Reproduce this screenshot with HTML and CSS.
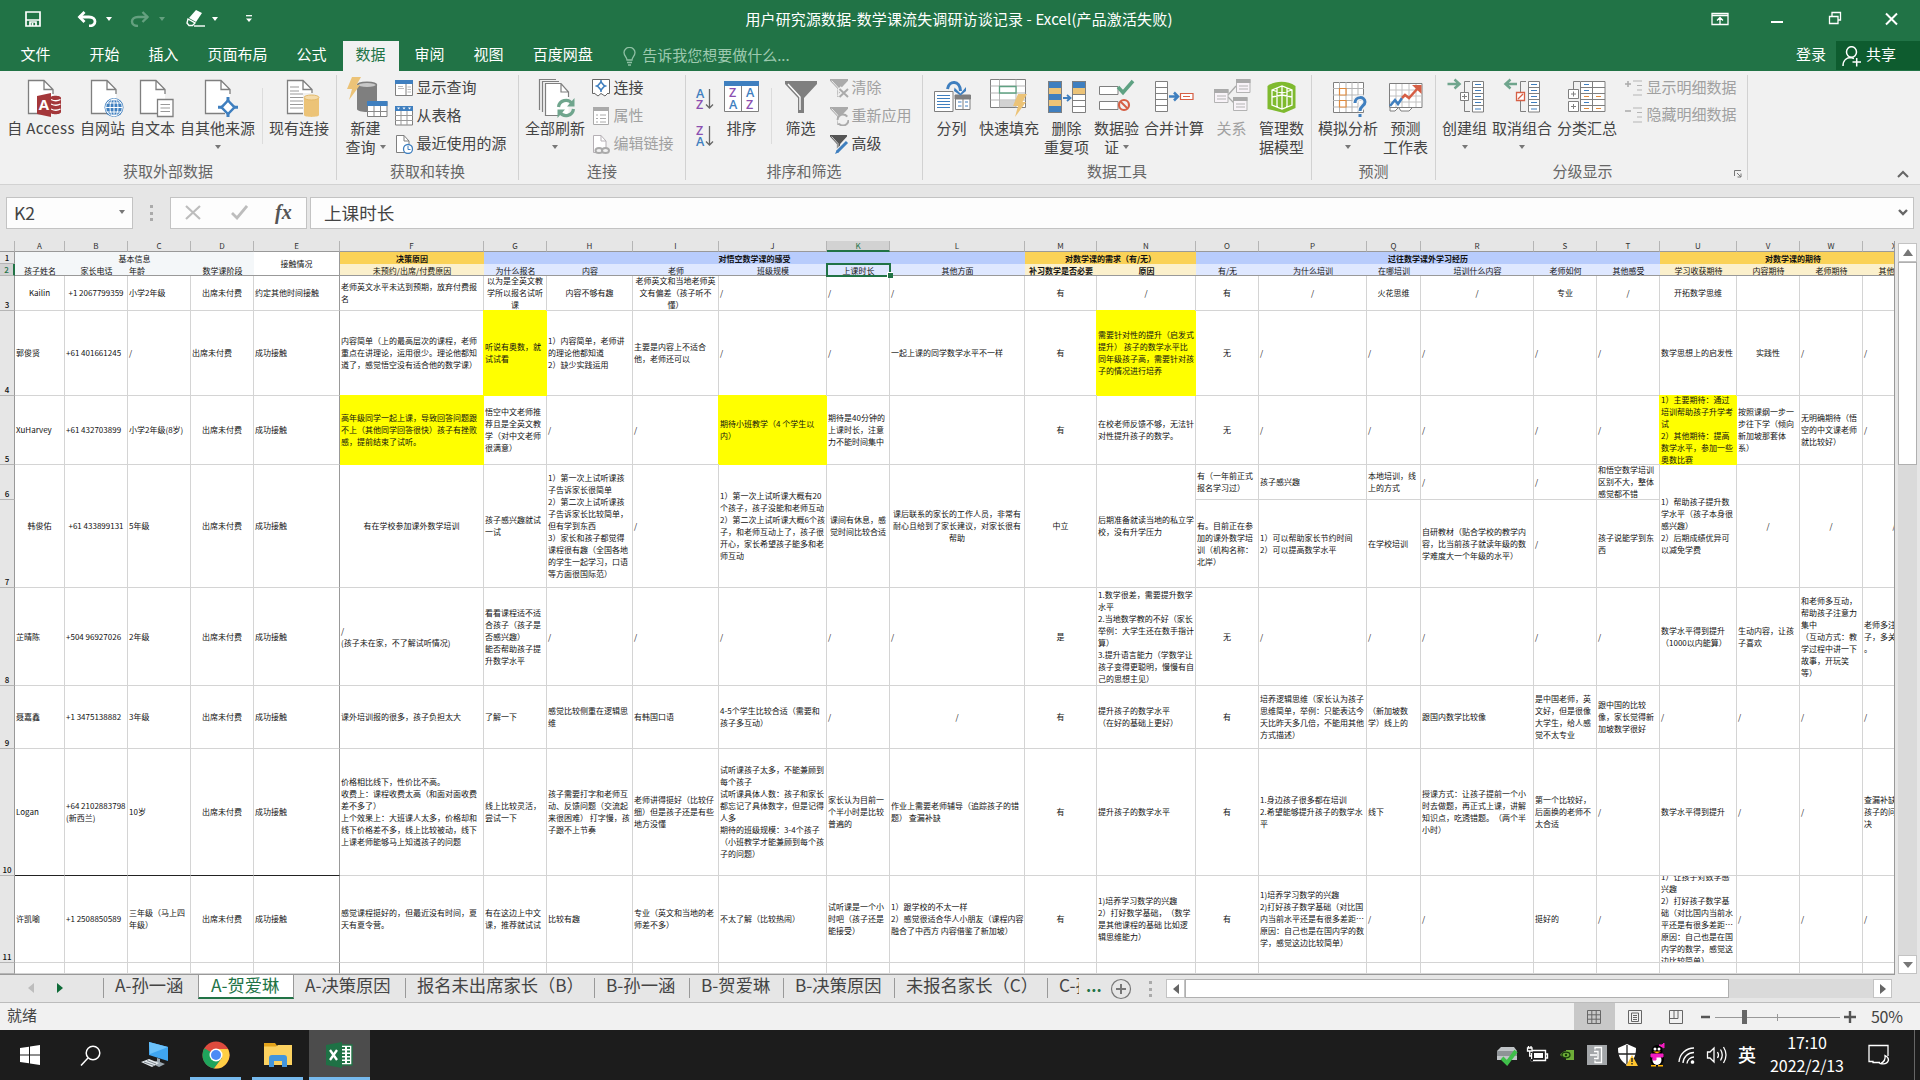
FILE: index.html
```html
<!DOCTYPE html>
<html lang="zh-CN">
<head>
<meta charset="utf-8">
<title>用户研究源数据-数学课流失调研访谈记录 - Excel</title>
<link rel="stylesheet" href="styles.css">
</head>
<body>
<svg class="defs" width="0" height="0">
  <symbol id="doc" viewBox="0 0 26 35" overflow="visible"><path d="M.5 34V.5H16L25 9.5V34z" fill="#fff" stroke="none"/><path d="M20 33.5H.5V.5H16L25 9.5V14M16 .5V9.5H25" fill="none" stroke="#7f7f7f" stroke-width="1.3"/></symbol>
  <symbol id="bolt" viewBox="0 0 14 23" overflow="visible"><path d="M5 0H14L9.5 8H13L2 23L5 12H0z" fill="#ecc377"/></symbol>
  <symbol id="funnel" viewBox="0 0 32 32" overflow="visible"><path d="M0 0H32V3L19 17V32H13V17L0 3z"/><path d="M3 3L15 16V29" fill="none" stroke="#fff" stroke-width="1.4"/></symbol>
  <symbol id="rows" viewBox="0 0 12 32" overflow="visible"><path d="M.5.5H11.5V31H.5zM.5 6.5H11.5M.5 12.5H11.5M.5 18.5H11.5M.5 24.5H11.5" fill="#fff" stroke="#7f7f7f"/><path d="M3 3.5H9M3 9.5H9M3 15.5H9M3 21.5H9M3 28H9" stroke="#3d7dbd"/></symbol>
</svg>
<div class="app">
<header class="titlebar">
  <div class="quick">
    <svg class="save" width="16" height="16" fill="none" stroke="#fff"><path d="M1 1H15V15H1z" stroke-width="1.7"/><path d="M1 9H15" stroke-width="1.5"/><path d="M5 15V11H11V15M7.5 12V15" stroke-width="1.7"/></svg>
    <svg class="undo" width="20" height="16" fill="none" stroke="#fff"><path d="M2 6H12C20 6 20 15 12 15" stroke-width="2.8"/><path d="M7.5 1L2.5 6L7.5 11" stroke-width="2.8"/></svg><i class="caret"></i>
    <svg class="redo" width="20" height="16" fill="none" stroke="#64a07f"><path d="M18 6H8C0 6 0 15 8 15" stroke-width="2.4"/><path d="M12.5 1L17.5 6L12.5 11" stroke-width="2.4"/></svg><i class="caret dim"></i>
    <svg class="eraser" width="19" height="18"><path d="M10 1L16 4L10 13L3 9z" fill="#fff"/><path d="M2 10L9 14L6.500 16.500H3L1 14z" fill="none" stroke="#fff" stroke-width="1.400"/><path d="M8 17H19" stroke="#fff" stroke-width="1.400"/></svg><i class="caret"></i>
    <svg class="more" width="8" height="8"><path d="M1 .7H7" stroke="#fff" stroke-width="1.300"/><path d="M1 3.500H7L4 7z" fill="#fff"/></svg>
  </div>
  <div class="title">用户研究源数据-数学课流失调研访谈记录 - Excel(产品激活失败)</div>
  <div class="winbtns">
    <svg width="58" height="38" fill="none" stroke="#fff" stroke-width="1.300"><path d="M21 13.500H37V24.500H21zM21 15.500H37M29 24V17.500M26 20.500L29 17.500L32 20.500"/></svg>
    <svg width="57" height="38"><path d="M22 22H34" stroke="#fff" stroke-width="2"/></svg>
    <svg width="57" height="38" fill="none" stroke="#fff" stroke-width="1.300"><path d="M23.500 16.500H32V23.500H23.500zM26 16V12.500H34.500V20H32"/></svg>
    <svg width="57" height="38"><path d="M23 13.500L34 24.500M34 13.500L23 24.500" stroke="#fff" stroke-width="2"/></svg>
  </div>
</header>
<nav class="tabs">
  <span class="file">文件</span><span>开始</span><span>插入</span><span>页面布局</span><span>公式</span><span class="on">数据</span><span>审阅</span><span>视图</span><span>百度网盘</span>
  <svg class="bulb" width="13" height="19" fill="none" stroke="#8fc0a4" stroke-width="1.300"><path d="M4 13C4 10 1 9 1 5.500A5.400 5 0 0 1 12 5.500C12 9 9 10 9 13zM4 15.500H9M5 18H8"/></svg>
  <em>告诉我您想要做什么...</em>
  <b class="login">登录</b>
  <div class="share"><svg width="20" height="21" fill="none" stroke="#fff" stroke-width="1.500"><ellipse cx="9.500" cy="6" rx="5" ry="5.300"/><path d="M1 20C1 14 5 11.500 9 11.500L12 12.500M10.500 16H19M14.700 12V20.500"/></svg>共享</div>
</nav>
<section class="ribbon">
  <div class="group g1"><div class="tools">
    <div class="btn access"><svg class="ico"><use href="#doc" x="11" y="2" width="26" height="35"/><path d="M33 20V34C33 37 44 37 44 34V20C44 17 33 17 33 20z" fill="#a4373a"/><path d="M34 21.500Q39 24 43.500 21.500M34 26Q39 28.500 43.500 26M34 31Q39 33.500 43.500 31" stroke="#fff" fill="none" stroke-width="1.300"/><path d="M20 18L34 15V39L20 36z" fill="#a4373a"/><text x="27" y="32" class="aico">A</text></svg>自 Access</div>
    <div class="btn"><svg class="ico"><use href="#doc" x="12" y="2" width="26" height="35"/><circle cx="35" cy="29.500" r="9.500" fill="#3f7fbf"/><g fill="none" stroke="#fff"><ellipse cx="35" cy="29.500" rx="4" ry="8.500"/><circle cx="35" cy="29.500" r="8.300"/><path d="M26.500 29.500H43.500M35 21V38M28 25H42M28 34H42"/></g></svg>自网站</div>
    <div class="btn"><svg class="ico"><use href="#doc" x="11" y="2" width="26" height="35"/><path d="M28.500 21.500H44V38.500H28.500z" fill="#fff" stroke="#7f7f7f" stroke-width="1.300"/><path d="M31.500 26.500H41M31.500 30H41M31.500 33.500H41" stroke="#999"/></svg>自文本</div>
    <div class="btn"><svg class="ico"><use href="#doc" x="11" y="2" width="26" height="35"/><path d="M34 19V39M24 29.300H44" stroke="#3f7fbf" stroke-width="3"/><path d="M34 22.500L40.500 29.300L34 36L27.500 29.300z" fill="#fff" stroke="#3f7fbf" stroke-width="2.500"/></svg>自其他来源<i class="caret gray"></i></div>
    <div class="rule"></div>
    <div class="btn"><svg class="ico"><use href="#doc" x="12" y="2" width="26" height="35"/><path d="M15 9H24M15 13H24M15 16H34M15 19.500H28M15 23H28M15 26.500H28M15 30H28" stroke="#999"/><path d="M28 15H45V40H28z" fill="#f1f1f1"/><path d="M29 19.500V37C29 39.500 44 39.500 44 37V19.500z" fill="#ecc377"/><ellipse cx="36.500" cy="19.500" rx="7.500" ry="2.500" fill="#f5dba9" stroke="#e3b969"/></svg>现有连接</div>
  </div><footer>获取外部数据</footer></div>
  <div class="group g2"><div class="tools">
    <div class="btn"><svg class="ico"><path d="M15 7V31C15 35 35 35 35 31V7z" fill="#7f7f7f"/><ellipse cx="25" cy="7" rx="9.500" ry="2.800" fill="#c8c8c8" stroke="#7f7f7f" stroke-width="1.500"/><use href="#bolt" x="5" y="-1" width="14" height="23"/><path d="M25.500 23.500H45V38.500H25.500z" fill="#fff" stroke="#7f7f7f"/><path d="M25 23H45.500V28H25z" fill="#3f7fbf"/><path d="M25.500 33.500H45M32 28V38M38.500 28V38" stroke="#888"/></svg><span>新建</span><span>查询<i class="caret gray side"></i></span></div>
    <div class="list">
      <p><svg width="18" height="16"><path d="M.5.5H17.500V15.500H.5z" fill="#fff" stroke="#7f7f7f"/><path d="M0 0H18V4H0z" fill="#3f7fbf"/><path d="M11 4V15.500" stroke="#7f7f7f"/><path d="M12.500 7H16M12.500 9.500H16M12.500 12H16M3 6.500H8M3 8.500H9" stroke="#bbb"/></svg>显示查询</p>
      <p><svg width="18" height="20"><path d="M.5.5H17.500V19H.5z" fill="#fff" stroke="#7f7f7f"/><path d="M0 0H18V5H0z" fill="#3f7fbf"/><path d="M2 1.500H5L3.500 3.500zM7.500 1.500H10.500L9 3.500zM13 1.500H16L14.500 3.500z" fill="#fff"/><path d="M0 9.500H18M0 14.500H18M6 5V19M12 5V19" stroke="#999"/></svg>从表格</p>
      <p><svg width="18" height="19"><path d="M1.500 17.500V.5H9L14 6V17.500z" fill="#fff" stroke="#7f7f7f"/><path d="M9 .5V6H14" fill="none" stroke="#7f7f7f"/><circle cx="13" cy="14" r="4.500" fill="#fff" stroke="#3f7fbf" stroke-width="1.300"/><path d="M13 11V14.500H15.500" fill="none" stroke="#3f7fbf"/></svg>最近使用的源</p>
    </div>
  </div><footer>获取和转换</footer></div>
  <div class="group g3"><div class="tools">
    <div class="btn"><svg class="ico"><path d="M8.500 32V1.500H25M11.500 34V3.500H28" fill="none" stroke="#7f7f7f" stroke-width="1.200"/><path d="M14.500 37.500V5.500H30L37.500 14V37.500z" fill="#fff"/><path d="M28 37.500H14.500V5.500H30L37.500 14V19M30 5.500V14H37.500" fill="none" stroke="#7f7f7f" stroke-width="1.200"/><g fill="none" stroke="#6fa58d" stroke-width="3.200"><path d="M27.500 29A7.500 7.500 0 0 1 41 25.500M42.500 31A7.500 7.500 0 0 1 29 34.500"/></g><path d="M43.500 20V28.500H36zM26.500 40V31.500H34z" fill="#6fa58d"/></svg>全部刷新<i class="caret gray"></i></div>
    <div class="list">
      <p><svg width="18" height="18"><path d="M.5.5H17.500V14.500H.5z" fill="#fff" stroke="#666"/><path d="M9 3L12.500 7L9 11L5.500 7z" fill="none" stroke="#3f7fbf" stroke-width="1.600"/><path d="M9 1V4M9 10V13M3.500 7H6M12 7H14.500" stroke="#3f7fbf" stroke-width="1.500"/><path d="M2 14L6 17L9 14.500L13 17L16 14" stroke="#666" fill="#fff"/></svg>连接</p>
      <p class="off"><svg width="18" height="18"><path d="M1.500.5H16.500V17.500H1.500z" fill="#fff" stroke="#aaa"/><path d="M1 0H17V4H1z" fill="#aaa"/><path d="M4 8H6M8 8H14M4 11.500H6M8 11.500H14M4 15H6M8 15H14" stroke="#aaa"/></svg>属性</p>
      <p class="off"><svg width="18" height="19"><path d="M1.500 17.500V.5H9L14 6V17.500z" fill="#fff" stroke="#b5b0b5"/><path d="M9 .5V6H14" fill="none" stroke="#b5b0b5"/><g fill="#f1f1f1" stroke="#aaa" stroke-width="2"><ellipse cx="7" cy="15.500" rx="3.500" ry="2.500"/><ellipse cx="13.500" cy="15.500" rx="3.500" ry="2.500"/></g></svg>编辑链接</p>
    </div>
  </div><footer>连接</footer></div>
  <div class="group g4"><div class="tools">
    <div class="sorts">
      <svg width="18" height="22"><text x="0" y="10" class="az b">A</text><text x="0" y="21" class="az p">Z</text><path d="M13.500 1V20M10 16.500L13.500 20L17 16.500" fill="none" stroke="#666" stroke-width="1.300"/></svg>
      <svg width="18" height="22"><text x="0" y="10" class="az p">Z</text><text x="0" y="21" class="az b">A</text><path d="M13.500 1V20M10 16.500L13.500 20L17 16.500" fill="none" stroke="#666" stroke-width="1.300"/></svg>
    </div>
    <div class="btn"><svg class="ico"><path d="M6.500 3.500H40.500V33.500H6.500z" fill="#fff" stroke="#7f7f7f"/><path d="M6 3H41V8H6z" fill="#3f7fbf"/><path d="M23.500 8V33" stroke="#7f7f7f"/><text x="11" y="19" class="az p">Z</text><text x="11" y="31" class="az b">A</text><text x="28" y="19" class="az b">A</text><text x="28" y="31" class="az p">Z</text></svg>排序</div>
    <div class="rule"></div>
    <div class="btn"><svg class="ico"><use href="#funnel" x="8" y="3" width="32" height="32" fill="#7f7f7f"/></svg>筛选</div>
    <div class="list">
      <p class="off"><svg width="19" height="19"><use href="#funnel" x="0" y="0" width="18" height="18" fill="#aaa"/><path d="M9 9L18 18M18 9L9 18" stroke="#f1f1f1" stroke-width="5"/><path d="M9.500 10L18 18M18 10L9.500 18" stroke="#aaa" stroke-width="2"/></svg>清除</p>
      <p class="off"><svg width="19" height="19"><use href="#funnel" x="0" y="0" width="18" height="18" fill="#aaa"/><circle cx="13" cy="13" r="5.500" fill="#f1f1f1" stroke="#aaa" stroke-width="2" stroke-dasharray="13 4"/></svg>重新应用</p>
      <p><svg width="19" height="19"><use href="#funnel" x="0" y="0" width="17" height="17" fill="#555"/><path d="M6 18L16 8" stroke="#f1f1f1" stroke-width="5"/><path d="M7 17L17 7" stroke="#3f7fbf" stroke-width="3"/><path d="M5 19L8.500 17.500L6.500 15.500z" fill="#3f7fbf"/></svg>高级</p>
    </div>
  </div><footer>排序和筛选</footer></div>
  <div class="group g5"><div class="tools">
    <div class="btn"><svg class="ico"><path d="M6.500 13.500H25V33.500H6.500zM27.500 17.500H42V31.500H27.500z" fill="#fff" stroke="#7f7f7f"/><path d="M9 17.500H22M9 20.500H22M9 23.500H22M9 26.500H22M9 29.500H22M30 24H33.500M37 24H40M30 28H33.500M37 28H40" stroke="#3f7fbf"/><path d="M27 17H42.500V21H27zM35 20V31.500" fill="#7f7f7f" stroke="#7f7f7f"/><path d="M19.500 11C21 2 32 2 32.500 13" fill="none" stroke="#3f7fbf" stroke-width="3"/><path d="M26.500 9.500L32.500 15.500L38 9V13L32.500 17.500L26 13z" fill="#3f7fbf"/></svg>分列</div>
    <div class="btn"><svg class="ico"><path d="M5.500 1.500H40.500V29.500H5.500z" fill="#fff" stroke="#7f7f7f"/><path d="M14.500 22.500H31V29H14.500z" fill="#d2d2d2"/><path d="M5.500 8H40.500M5.500 15H40.500M5.500 22H40.500M14.500 1.500V29.500M31 1.500V29.500" stroke="#b5b5b5"/><path d="M14.500 8.500H31V15H14.500z" fill="#fff" stroke="#5fa283" stroke-width="1.300"/><use href="#bolt" x="28" y="16" width="14" height="23"/></svg>快速填充</div>
    <div class="btn"><svg class="ico"><path d="M5.500 3.500H18.500V34.500H5.500zM29.500 3.500H42.500V34.500H29.500z" fill="#fff"/><path d="M5 3H19V10H5zM5 16H19V22H5zM5 28H19V35H5zM29 3H43V10H29z" fill="#3f7fbf"/><path d="M5 10H19V16H5zM5 22H19V28H5zM29 10H43V16H29z" fill="#ecc377"/><path d="M5.500 3.500H18.500V34.500H5.500zM29.500 3.500H42.500V34.500H29.500zM29.500 16.500H42.500M29.500 22.500H42.500M29.500 28.500H42.500" fill="none" stroke="#7f7f7f"/><path d="M20 20H27M24 17L27.500 20L24 23" fill="none" stroke="#3f7fbf" stroke-width="1.800"/></svg><span>删除</span><span>重复项</span></div>
    <div class="btn"><svg class="ico"><path d="M6.500 8.500H25V16.500H6.500zM6.500 23.500H25V31.500H6.500z" fill="#fff" stroke="#7f7f7f"/><path d="M25 9L30 14.500L40 3" fill="none" stroke="#5fa283" stroke-width="3.500"/><circle cx="31" cy="27" r="5" fill="#f1f1f1" stroke="#d65f45" stroke-width="2.200"/><path d="M27.500 23.500L34.500 30.500" stroke="#d65f45" stroke-width="2"/></svg><span>数据验</span><span>证<i class="caret gray side"></i></span></div>
    <div class="btn"><svg class="ico"><path d="M5.500 3.500H17.500V33.500H5.500zM5.500 9.500H17.500M5.500 15.500H17.500M5.500 21.500H17.500M5.500 27.500H17.500" fill="#fff" stroke="#7f7f7f"/><path d="M19 18.500H28M24 14.500L28 18.500L24 22.500" fill="none" stroke="#3f7fbf" stroke-width="2.500"/><path d="M30.500 15.500H43V21.500H30.500zM33 18.500H40" fill="#fff" stroke="#d65f45" stroke-width="1.200"/></svg>合并计算</div>
    <div class="btn off"><svg class="ico"><path d="M20 17L28 8M20 19L26 25" stroke="#aaa" stroke-width="1.300"/><path d="M6.500 11.500H20V24.500H6.500zM28.500 1.500H42V14.500H28.500zM25.500 19.500H39V32.500H25.500z" fill="#f8f3f8" stroke="#b3b3b3"/><path d="M6 11H20.500V15H6zM28 1H42.500V5H28zM25 19H39.500V23H25z" fill="#aaa"/><path d="M9 18H18M9 21H18M31 8H40M31 11H40M28 26H37M28 29H37" stroke="#b3b3b3"/></svg>关系</div>
    <div class="btn"><svg class="ico"><path d="M9.500 8C16 3 29 2 37.500 8V30L26 35L9.500 31z" fill="#7fba2f"/><g fill="none" stroke="#fff" stroke-width="1.300"><path d="M14 12L24 8L34 12V27L24 31L14 27zM14 19L24 17L34 19M24 8V31M19 10V29M29 10V29M14 12L24 15L34 12"/></g></svg><span>管理数</span><span>据模型</span></div>
  </div><footer>数据工具</footer></div>
  <div class="group g6"><div class="tools">
    <div class="btn"><svg class="ico"><path d="M9.500 4.500H39.500V34.500H9.500z" fill="#fff" stroke="#7f7f7f"/><path d="M15.500 4V34M22 4V34M28 4V34M34 4V34M9 10.500H40M9 17H40M9 22.500H40M9 29H40" stroke="#b5b5b5"/><path d="M15.500 10.500H22V17H15.500zM15.500 22.500H22V29H15.500z" fill="#fff" stroke="#e08a3c" stroke-width="1.200"/><path d="M31 25C31 18 41 18 41 24C41 28 36 28 36 33" fill="none" stroke="#f1f1f1" stroke-width="6"/><path d="M31 25C31 18 41 18 41 24C41 28 36 28 36 33M36 36V39" fill="none" stroke="#3f7fbf" stroke-width="3"/></svg>模拟分析<i class="caret gray"></i></div>
    <div class="btn"><svg class="ico"><path d="M7.500 5.500H40V29.500H7.500z" fill="#fff" stroke="#7f7f7f"/><path d="M14 6V29M20 6V29M27 6V29M34 6V29M8 12H40M8 18H40M8 24H40" stroke="#c2c2c2"/><path d="M8 30V33H13L16 30M17 30L19 33H27L30 30" fill="#fff" stroke="#7f7f7f"/><path d="M8 28L13 22L16 26L20 20" fill="none" stroke="#3f7fbf" stroke-width="2.500"/><path d="M20 20L23 17L27 20L36 10" fill="none" stroke="#d65f45" stroke-width="2.500"/><path d="M30 7H39.500V16z" fill="#d65f45"/></svg><span>预测</span><span>工作表</span></div>
  </div><footer>预测</footer></div>
  <div class="group g7"><div class="tools">
    <div class="btn"><svg class="ico"><path d="M6.500 6H18M13.500 1.500L18.500 6L13.500 10.500" fill="none" stroke="#6fa58d" stroke-width="2.500"/><path d="M29 3.500H23.500V33.500H29" fill="none" stroke="#7f7f7f"/><path d="M19.500 14.500H27.500V22.500H19.500zM21 18.500H26M23.500 16V21" fill="#fff" stroke="#7f7f7f"/><use href="#rows" x="31" y="3" width="12" height="32"/></svg>创建组<i class="caret gray"></i></div>
    <div class="btn"><svg class="ico"><path d="M8 6H19M12.500 1.500L7.500 6L12.500 10.500" fill="none" stroke="#6fa58d" stroke-width="2.500"/><path d="M28 3.500H22.500V33.500H28" fill="none" stroke="#7f7f7f"/><path d="M18.500 14.500H26.500V22.500H18.500zM20 21L25 16" fill="#fff" stroke="#d65f45" stroke-width="1.300"/><use href="#rows" x="30" y="3" width="12" height="32"/></svg>取消组合<i class="caret gray"></i></div>
    <div class="btn"><svg class="ico"><path d="M17 3.500H10.500V11" fill="none" stroke="#7f7f7f"/><path d="M5.500 11.500H15.500V20.500H5.500zM8 16H13M10.500 13.500V18.500M5.500 23.500H15.500V33.500H5.500zM8 28.500H13M10.500 26V31" fill="#fff" stroke="#7f7f7f"/><path d="M17.500 3.500H42V33.500H17.500zM17.500 9.500H42M17.500 15.500H42M17.500 21.500H42M17.500 27.500H42M29.500 3.500V33.500" fill="#fff" stroke="#7f7f7f"/><path d="M21 6.500H26M21 12.500H26M21 24.500H26" stroke="#3f7fbf"/><path d="M21 18.500H26M33 18.500H38M21 30.500H26M33 30.500H38" stroke="#e08a3c"/></svg>分类汇总</div>
    <div class="list near">
      <p class="off"><svg width="18" height="16"><path d="M0 4H6M3 1V7" stroke="#aaa" stroke-width="1.500"/><path d="M8 1H17M12 5.500H17M12 10H17M8 15H17" stroke="#b5b5b5"/></svg>显示明细数据</p>
      <p class="off"><svg width="18" height="16"><path d="M0 4H6" stroke="#aaa" stroke-width="1.500"/><path d="M8 1H17M12 5.500H17M12 10H17M8 15H17" stroke="#b5b5b5"/></svg>隐藏明细数据</p>
    </div>
  </div><footer>分级显示<svg class="launch" width="8" height="8"><path d="M.5 6V.5H7M3 3L7 7M7 3.500V7H3.500" fill="none" stroke="#777"/></svg></footer></div>
  <svg class="collapse" width="12" height="8"><path d="M1 7L6 2L11 7" fill="none" stroke="#666" stroke-width="2"/></svg>
</section>
<section class="fbar">
  <div class="namebox">K2<i class="caret gray"></i></div>
  <div class="dots"></div>
  <div class="fx"><svg width="16" height="15"><path d="M1 1L15 14M15 1L1 14" stroke="#bdbdbd" stroke-width="2.200"/></svg><svg width="17" height="15"><path d="M1 8L6 13L16 1" fill="none" stroke="#bdbdbd" stroke-width="2.800"/></svg><b>fx</b></div>
  <div class="input">上课时长<svg width="10" height="7"><path d="M1 1L5 5L9 1" fill="none" stroke="#666" stroke-width="2.400"/></svg></div>
</section>
<main class="work">
<div class="sheet">
<div class="h corner"></div><div class="h">A</div><div class="h">B</div><div class="h">C</div><div class="h">D</div><div class="h">E</div><div class="h">F</div><div class="h">G</div><div class="h">H</div><div class="h">I</div><div class="h">J</div><div class="h sel">K</div><div class="h">L</div><div class="h">M</div><div class="h">N</div><div class="h">O</div><div class="h">P</div><div class="h">Q</div><div class="h">R</div><div class="h">S</div><div class="h">T</div><div class="h">U</div><div class="h">V</div><div class="h">W</div><div class="h">X</div>

<div class="n">1</div><div class="t pale s4">基本信息</div><div class="t tall">接触情况</div><div class="t gold">决策原因</div><div class="t blue s6">对悟空数学课的感受</div><div class="t gold s2">对数学课的需求（有/无）</div><div class="t blue s6">过往数学课外学习经历</div><div class="t gold s4">对数学课的期待</div>

<div class="n sel">2</div><div class="t pale l">孩子姓名</div><div class="t pale l">家长电话</div><div class="t pale l left">年龄</div><div class="t pale l">数学课阶段</div><div class="t cream l">未预约/出席/付费原因</div><div class="t sky l">为什么报名</div><div class="t sky l">内容</div><div class="t sky l">老师</div><div class="t sky l">班级规模</div><div class="t sky l active">上课时长</div><div class="t sky l">其他方面</div><div class="t cream l bold">补习数学是否必要</div><div class="t cream l bold">原因</div><div class="t sky l">有/无</div><div class="t sky l">为什么培训</div><div class="t sky l">在哪培训</div><div class="t sky l">培训什么内容</div><div class="t sky l">老师如何</div><div class="t sky l">其他感受</div><div class="t cream l">学习收获期待</div><div class="t cream l">内容期待</div><div class="t cream l">老师期待</div><div class="t cream l">其他期待</div>

<div class="n">3</div><div class="c m">Kailin</div><div class="c m">+1 2067799359</div><div class="c">小学2年级</div><div class="c m">出席未付费</div><div class="c fz">约定其他时间接触</div><div class="c"><p>老师英文水平未达到预期，放弃付费报<br>名</p></div><div class="c m"><p>以为是全英文教<br>学所以报名试听<br>课</p></div><div class="c m">内容不够有趣</div><div class="c m"><p>老师英文和当地老师英<br>文有偏差（孩子听不<br>懂）</p></div><div class="c">/</div><div class="c">/</div><div class="c">/</div><div class="c m">有</div><div class="c m">/</div><div class="c m">有</div><div class="c m">/</div><div class="c m">火花思维</div><div class="c m">/</div><div class="c m">专业</div><div class="c m">/</div><div class="c m">开拓数学思维</div><div class="c"></div><div class="c"></div><div class="c"></div>

<div class="n">4</div><div class="c">郭俊贤</div><div class="c">+61 401661245</div><div class="c">/</div><div class="c">出席未付费</div><div class="c fz">成功接触</div><div class="c"><p>内容简单（上的最高层次的课程，老师<br>重点在讲理论，运用很少。理论他都知<br>道了，感觉悟空没有适合他的数学课）</p></div><div class="c y"><p>听说有奥数，就<br>试试看</p></div><div class="c"><p>1）内容简单，老师讲<br>的理论他都知道<br>2）缺少实践运用</p></div><div class="c"><p>主要是内容上不适合<br>他，老师还可以</p></div><div class="c">/</div><div class="c">/</div><div class="c">一起上课的同学数学水平不一样</div><div class="c m">有</div><div class="c y"><p>需要针对性的提升（启发式<br>提升） 孩子的数学水平比<br>同年级孩子高，需要针对孩<br>子的情况进行培养</p></div><div class="c m">无</div><div class="c">/</div><div class="c">/</div><div class="c">/</div><div class="c">/</div><div class="c">/</div><div class="c">数学思想上的启发性</div><div class="c m">实践性</div><div class="c">/</div><div class="c">/</div>

<div class="n">5</div><div class="c">XuHarvey</div><div class="c">+61 432703899</div><div class="c">小学2年级(8岁)</div><div class="c m">出席未付费</div><div class="c fz">成功接触</div><div class="c y first"><p>高年级同学一起上课，导致回答问题跟<br>不上（其他同学回答很快）孩子有挫败<br>感，提前结束了试听。</p></div><div class="c"><p>悟空中文老师推<br>荐且是全英文教<br>学（对中文老师<br>很满意）</p></div><div class="c">/</div><div class="c">/</div><div class="c y"><p>期待小班教学（4 个学生以<br>内）</p></div><div class="c"><p>期待是40分钟的<br>上课时长，注意<br>力不能时间集中</p></div><div class="c"></div><div class="c m">有</div><div class="c"><p>在校老师反馈不够，无法针<br>对性提升孩子的数学。</p></div><div class="c m">无</div><div class="c">/</div><div class="c">/</div><div class="c">/</div><div class="c">/</div><div class="c">/</div><div class="c y"><p>1）主要期待：通过<br>培训帮助孩子升学考<br>试<br>2）其他期待：提高<br>数学水平，参加一些<br>奥数比赛</p></div><div class="c"><p>按照课纲一步一<br>步往下学（倾向<br>新加坡那套体<br>系）</p></div><div class="c"><p>无明确期待（悟<br>空的中文课老师<br>就比较好）</p></div><div class="c">/</div>

<div class="n">6</div><div class="c m d">韩俊佑</div><div class="c m d">+61 433899131</div><div class="c d">5年级</div><div class="c m d">出席未付费</div><div class="c d fz">成功接触</div><div class="c m d">有在学校参加课外数学培训</div><div class="c d"><p>孩子感兴趣就试<br>一试</p></div><div class="c d"><p>1）第一次上试听课孩<br>子告诉家长很简单<br>2）第二次上试听课孩<br>子告诉家长比较简单，<br>但有学到东西<br>3）家长和孩子都觉得<br>课程很有趣（全国各地<br>的学生一起学习，口语<br>等方面很国际范）</p></div><div class="c d">/</div><div class="c d"><p>1）第一次上试听课大概有20<br>个孩子，孩子没能和老师互动<br>2）第二次上试听课大概6个孩<br>子，和老师互动上了，孩子很<br>开心，家长希望孩子能多和老<br>师互动</p></div><div class="c m d"><p>课间有休息，感<br>觉时间比较合适</p></div><div class="c m d"><p>课后联系的家长的工作人员，非常有<br>耐心且给到了家长建议，对家长很有<br>帮助</p></div><div class="c m d">中立</div><div class="c d"><p>后期准备就读当地的私立学<br>校，没有升学压力</p></div><div class="c"><p>有（一年前正式<br>报名学习过）</p></div><div class="c">孩子感兴趣</div><div class="c"><p>本地培训，线<br>上的方式</p></div><div class="c">/</div><div class="c">/</div><div class="c"><p>和悟空数学培训<br>区别不大，整体<br>感觉都不错</p></div><div class="c d"><p>1）帮助孩子提升数<br>学水平（孩子本身很<br>感兴趣）<br>2）后期成绩优异可<br>以减免学费</p></div><div class="c m d">/</div><div class="c m d">/</div><div class="c m d">/</div>

<div class="n">7</div><div class="c"><p>有。目前正在参<br>加的课外数学培<br>训（机构名称：<br>北岸）</p></div><div class="c"><p>1）可以帮助家长节约时间<br>2）可以提高数学水平</p></div><div class="c">在学校培训</div><div class="c"><p>自研教材（贴合学校的教学内<br>容，比当前孩子就读年级的数<br>学难度大一个年级的水平）</p></div><div class="c">/</div><div class="c"><p>孩子说能学到东<br>西</p></div>

<div class="n">8</div><div class="c">芷晴陈</div><div class="c">+504 96927026</div><div class="c">2年级</div><div class="c m">出席未付费</div><div class="c fz">成功接触</div><div class="c"><p>/<br>(孩子未在家，不了解试听情况)</p></div><div class="c"><p>看看课程适不适<br>合孩子（孩子是<br>否感兴趣）<br>能否帮助孩子提<br>升数学水平</p></div><div class="c">/</div><div class="c">/</div><div class="c">/</div><div class="c">/</div><div class="c">/</div><div class="c m">是</div><div class="c"><p>1.数学很差，需要提升数学<br>水平<br>2.当地数学教的不好（家长<br>举例：大学生还在数手指计<br>算）<br>3.提升语言能力（学数学让<br>孩子变得更聪明，慢慢有自<br>己的思想主见）</p></div><div class="c m">无</div><div class="c">/</div><div class="c">/</div><div class="c">/</div><div class="c">/</div><div class="c">/</div><div class="c"><p>数学水平得到提升<br>（1000以内能算）</p></div><div class="c"><p>生动内容，让孩<br>子喜欢</p></div><div class="c"><p>和老师多互动，<br>帮助孩子注意力<br>集中<br>（互动方式：教<br>学过程中讲一下<br>故事，开玩笑<br>等）</p></div><div class="c"><p>老师多注意孩<br>子，多关注<br>。</p></div>

<div class="n">9</div><div class="c">聂嘉鑫</div><div class="c">+1 3475138882</div><div class="c">3年级</div><div class="c m">出席未付费</div><div class="c fz">成功接触</div><div class="c">课外培训报的很多，孩子负担太大</div><div class="c">了解一下</div><div class="c"><p>感觉比较侧重在逻辑思<br>维</p></div><div class="c">有韩国口语</div><div class="c"><p>4-5个学生比较合适（需要和<br>孩子多互动）</p></div><div class="c">/</div><div class="c m">/</div><div class="c m">有</div><div class="c"><p>提升孩子的数学水平<br>（在好的基础上更好）</p></div><div class="c m">有</div><div class="c"><p>培养逻辑思维（家长认为孩子<br>思维简单，举例：只能表达今<br>天比昨天多几倍，不能用其他<br>方式描述）</p></div><div class="c"><p>（新加坡数<br>学）线上的</p></div><div class="c">跟国内数学比较像</div><div class="c"><p>是中国老师，英<br>文好，但是很像<br>大学生，给人感<br>觉不太专业</p></div><div class="c"><p>跟中国的比较<br>像，家长觉得新<br>加坡数学很好</p></div><div class="c">/</div><div class="c">/</div><div class="c">/</div><div class="c">/</div>

<div class="n">10</div><div class="c k">Logan</div><div class="c k"><p>+64 2102883798<br>(新西兰)</p></div><div class="c k">10岁</div><div class="c m k">出席未付费</div><div class="c k fz">成功接触</div><div class="c"><p>价格相比线下，性价比不高。<br>收费上：课程收费太高（和面对面收费<br>差不多了）<br>上个效果上：大班课人太多，价格却和<br>线下价格差不多，线上比较被动，线下<br>上课老师能够马上知道孩子的问题</p></div><div class="c"><p>线上比较灵活，<br>尝试一下</p></div><div class="c"><p>孩子需要打字和老师互<br>动、反馈问题（交流起<br>来很困难） 打字慢，孩<br>子跟不上节奏</p></div><div class="c"><p>老师讲得挺好（比较仔<br>细）但是孩子还是有些<br>地方没懂</p></div><div class="c"><p>试听课孩子太多，不能兼顾到<br>每个孩子<br>试听课具体人数：孩子和家长<br>都忘记了具体数字，但是记得<br>人多<br>期待的班级规模：3-4个孩子<br>（小班教学才能兼顾到每个孩<br>子的问题）</p></div><div class="c"><p>家长认为目前一<br>个半小时是比较<br>普遍的</p></div><div class="c"><p>作业上需要老师辅导（追踪孩子的错<br>题） 查漏补缺</p></div><div class="c m">有</div><div class="c">提升孩子的数学水平</div><div class="c m">有</div><div class="c"><p>1.身边孩子很多都在培训<br>2.希望能够提升孩子的数学水<br>平</p></div><div class="c">线下</div><div class="c"><p>授课方式：让孩子提前一个小<br>时去做题，再正式上课，讲解<br>知识点，吃透错题。（两个半<br>小时）</p></div><div class="c"><p>第一个比较好，<br>后面换的老师不<br>太合适</p></div><div class="c">/</div><div class="c">数学水平得到提升</div><div class="c">/</div><div class="c">/</div><div class="c"><p>查漏补缺，把<br>孩子的问题解<br>决</p></div>

<div class="n">11</div><div class="c">许凯喻</div><div class="c">+1 2508850589</div><div class="c"><p>三年级（马上四<br>年级）</p></div><div class="c m">出席未付费</div><div class="c fz">成功接触</div><div class="c"><p>感觉课程挺好的，但最近没有时间，夏<br>天有夏令营。</p></div><div class="c"><p>有在这边上中文<br>课，推荐就试试</p></div><div class="c">比较有趣</div><div class="c"><p>专业（英文和当地的老<br>师差不多）</p></div><div class="c">不太了解（比较热闹）</div><div class="c"><p>试听课是一个小<br>时吧（孩子还是<br>能接受）</p></div><div class="c"><p>1）跟学校的不太一样<br>2）感觉很适合华人小朋友（课程内容<br>融合了中西方 内容借鉴了新加坡）</p></div><div class="c m">有</div><div class="c"><p>1)培养学习数学的兴趣<br>2）打好数学基础，<span class="full">（</span>数学<br>是其他课程的基础 比如逻<br>辑思维能力）</p></div><div class="c m">有</div><div class="c"><p>1)培养学习数学的兴趣<br>2)打好孩子数学基础（对比国<br>内当前水平还是有很多差距…<br>原因：自己也是在国内学的数<br>学，感觉这边比较简单）</p></div><div class="c">/</div><div class="c">/</div><div class="c">挺好的</div><div class="c">/</div><div class="c"><p>1）让孩子对数学感<br>兴趣<br>2）打好孩子数学基<br>础（对比国内当前水<br>平还是有很多差距…<br>原因：自己也是在国<br>内学的数学，感觉这<br>边比较简单）</p></div><div class="c">/</div><div class="c">/</div><div class="c">/</div>

<div class="n"></div><div class="c"></div><div class="c"></div><div class="c"></div><div class="c"></div><div class="c fz"></div><div class="c"></div><div class="c"></div><div class="c"></div><div class="c"></div><div class="c"></div><div class="c"></div><div class="c"></div><div class="c"></div><div class="c"></div><div class="c"></div><div class="c"></div><div class="c"></div><div class="c"></div><div class="c"></div><div class="c"></div><div class="c"></div><div class="c"></div><div class="c"></div><div class="c"></div>
</div>
<aside class="vscroll"><div class="arrow"><svg width="10" height="7"><path d="M0 7L5 0L10 7z" fill="#777"/></svg></div><div class="thumb"></div><div class="track"></div><div class="arrow"><svg width="10" height="6"><path d="M0 0L5 6L10 0z" fill="#777"/></svg></div></aside>
</main>
<section class="sheets">
  <div class="nav"><svg width="6" height="10"><path d="M6 0V10L0 5z" fill="#bdbdbd"/></svg><svg width="6" height="10"><path d="M0 0V10L6 5z" fill="#0f6b38"/></svg></div>
  <span class="st1">A-孙一涵</span><span class="cur">A-贺爱琳</span><span class="st2">A-决策原因</span><span class="st3">报名未出席家长（B）</span><span class="st4">B-孙一涵</span><span class="st5">B-贺爱琳</span><span class="st6">B-决策原因</span><span class="st7">未报名家长（C）</span><span class="st8"><i>C-孙</i></span>
  <b class="ell">...</b>
  <svg class="add" width="22" height="22" fill="none" stroke="#777"><circle cx="11" cy="11" r="9.500" stroke-width="1.200"/><path d="M6 11H16M11 6V16" stroke-width="2"/></svg>
  <div class="dots"></div>
  <div class="hscroll"><div class="arrow"><svg width="6" height="10"><path d="M6 0V10L0 5z" fill="#666"/></svg></div><div class="thumb"></div><div class="track"></div><div class="arrow"><svg width="6" height="10"><path d="M0 0V10L6 5z" fill="#666"/></svg></div></div>
</section>
<section class="status">
  <div class="ready">就绪</div>
  <div class="view on"><svg width="14" height="14" fill="none" stroke="#666"><path d="M.5.5H13.500V13.500H.5zM.5 4.800H13.500M.5 9.200H13.500M4.800 .5V13.500M9.200 .5V13.500"/></svg></div>
  <div class="view"><svg width="14" height="14" fill="none" stroke="#666"><path d="M.5.5H13.500V13.500H.5zM3.500 3H10.500V11.500H3.500zM5 5.500H9M5 7.500H9M5 9.500H9"/></svg></div>
  <div class="view"><svg width="14" height="14" fill="none" stroke="#666"><path d="M.5.5H13.500V13.500H.5zM.5 8.500H9V.5M5 .5V8.500"/></svg></div>
  <svg class="zoom" width="160" height="16"><path d="M0 8H9M143 8H155M149 2V14" stroke="#555" stroke-width="2.400"/><path d="M14 8.500H139M76.500 5V12" stroke="#999"/><path d="M41 1H46V15H41z" fill="#666"/></svg>
  <div class="pct">50%</div>
</section>
<footer class="taskbar">
  <div class="tb t1"><svg width="20" height="20" fill="#fff"><path d="M0 3L9 1.700V9.500H0zM10 1.500L20 0V9.500H10zM0 10.500H9V18.300L0 17zM10 10.500H20V20L10 18.500z"/></svg></div>
  <div class="tb t2"><svg width="21" height="21" fill="none" stroke="#fff" stroke-width="1.500"><circle cx="13" cy="8" r="6.800"/><path d="M8 13L1 20.500"/></svg></div>
  <div class="tb t3"><svg width="28" height="26"><path d="M8 0L27 5V19L8 13z" fill="#3fa5f0"/><path d="M8 0L27 5L9 12z" fill="#6cc2fb"/><path d="M16 16L19 17V20L24 22L18 25L10 21L16 19z" fill="#9aa6af"/><path d="M0 20L8 17L18 21L11 25z" fill="#e3e8ec"/><path d="M3 20L13 23.500M6 18.500L15 22" stroke="#7c858c"/></svg></div>
  <div class="tb run"><svg width="28" height="28"><circle cx="14" cy="14" r="13.500" fill="#dd4b3e"/><path d="M14 14L2.300 7.200A13.500 13.500 0 0 0 12 27.400L20 17z" fill="#1fa45c"/><path d="M14 8H26A13.500 13.500 0 0 1 12 27.400L20 17z" fill="#ffce44"/><circle cx="14" cy="14" r="6.500" fill="#fff"/><circle cx="14" cy="14" r="5" fill="#4c8bf5"/></svg></div>
  <div class="tb run r2"><svg width="28" height="24"><path d="M0 0H11L14 4H0z" fill="#e3a31b"/><path d="M0 3.500H12L14 2H28V22H0z" fill="#fbd160"/><path d="M5 24V15Q5 12 8 12H20Q23 12 23 15V24H18V18H10V24z" fill="#4295dd"/></svg></div>
  <div class="tb run cur"><svg width="27" height="26"><path d="M14 3H26V23H14z" fill="#fff" stroke="#217346" stroke-width="1.400"/><path d="M16 6H19M21 6H24M16 9.500H19M21 9.500H24M16 13H19M21 13H24M16 16.500H19M21 16.500H24M16 20H19M21 20H24" stroke="#217346" stroke-width="2"/><path d="M0 3L16 0V26L0 23z" fill="#1e7145"/><path d="M4 8L11 18M11 8L4 18" stroke="#fff" stroke-width="2.300"/></svg></div>
  <div class="tray">
    <svg width="30" height="26"><path d="M5 9L9 5H22L25 9V18H5z" fill="#bfc3c6"/><path d="M5 9H25V14H5z" fill="#8e9396"/><path d="M10 16L15 21L24 9" fill="none" stroke="#3fbf4a" stroke-width="4"/></svg>
    <svg width="30" height="26"><path d="M9.500 8.500H23.500V18.500H9.500zM24 12H25.500V16H24" fill="none" stroke="#fff" stroke-width="1.400"/><path d="M4 4H10V11H8V17H11V19H9V12H4z" fill="#1c1c1c"/><path d="M12 11H21V16H12z" fill="#fff"/><path d="M5.500 6H10V9H5.500zM6.500 4V6M9 4V6M7.700 9V14H10" fill="none" stroke="#fff" stroke-width="1.300"/></svg>
    <svg width="30" height="26"><path d="M14 8H22V18H14z" fill="#6ead38"/><path d="M8 13Q14 5 20 13Q14 19 8 13z" fill="#6ead38"/><ellipse cx="14" cy="13" rx="4" ry="2.800" fill="none" stroke="#173c0d" stroke-width="1.300"/><circle cx="14" cy="13" r="1.200" fill="#173c0d"/></svg>
    <svg width="30" height="26"><path d="M5 3H25V23H5z" fill="#a3a6a9"/><path d="M13 7.500V5.500H19.500V20.500H13V18.500M8 13H15M12 9.500H16V16.500H12" fill="none" stroke="#fff" stroke-width="1.300"/></svg>
    <svg width="30" height="26"><path d="M15 2L24 6C24 15 21 19 15 23C9 19 6 15 6 6z" fill="#fff"/><path d="M15 3V22M6 12H24" stroke="#222" stroke-width="1.300"/><path d="M20 13L26 24H14z" fill="#ffc42e"/><path d="M20 16V20M20 21V22.500" stroke="#222" stroke-width="1.400"/></svg>
    <svg width="30" height="26"><ellipse cx="15" cy="9" rx="5.500" ry="6" fill="#000"/><ellipse cx="15" cy="17" rx="7" ry="7" fill="#000"/><ellipse cx="15" cy="18" rx="4.500" ry="5" fill="#fff"/><circle cx="13" cy="7" r="1.500" fill="#fff"/><circle cx="17" cy="7" r="1.500" fill="#fff"/><path d="M11 9.500H19L15 11.500zM9 23H14V24.500H9zM16 23H21V24.500H16z" fill="#ffb400"/><path d="M9 12H21V15H14V18H11V15H9zM17 3L22 6V1L20 3z" fill="#f31cc0" stroke="#f31cc0"/></svg>
    <svg width="30" height="26" fill="none" stroke="#fff" stroke-width="1.300"><path d="M7 20A15 15 0 0 1 22 6M11 21A11 11 0 0 1 22 10.500M15 21.500A7 7 0 0 1 22 15"/><circle cx="20.500" cy="20" r="1.200" fill="#fff"/></svg>
    <svg width="30" height="26" fill="none" stroke="#fff" stroke-width="1.300"><path d="M5.500 10H8L12 6V20L8 16H5.500zM15.500 10Q17.500 13 15.500 16M18.500 7.500Q22 13 18.500 18.500M21.500 5Q26.500 13 21.500 21"/></svg>
    <span class="ime">英</span>
  </div>
  <div class="clock">17:10<br>2022/2/13</div>
  <svg class="note" width="22" height="22" fill="none" stroke="#fff" stroke-width="1.300"><path d="M12 18.500H10L7 18.500L5 18.500V17.500H1V1.500H20V12" /><path d="M17 11.500Q18 17 12.500 19.500Q19 21 20.500 16Q20.500 13 17 11.500z"/></svg>
  <div class="peek"></div>
</footer>
</div>
</body>
</html>
```
FILE: styles.css
```css
* { box-sizing: border-box; }
body { margin: 0; font-family: "Noto Sans CJK SC", "Noto Sans", sans-serif; font-size: 15px; color: #444; background: #e6e6e6; }
p { margin: 0; }
i, em { font-style: normal; }
svg { flex: none; }
.defs { display: block; position: absolute; }
.app { width: 1920px; height: 1080px; overflow: hidden; display: flex; flex-direction: column; }
.app > * { flex: none; }

/* title bar */
.titlebar { height: 41px; background: #217346; color: #fff; display: grid; grid-template-columns: 1fr auto 1fr; }
.quick { display: flex; align-items: center; height: 38px; padding-left: 25px; }
.undo { margin-left: 36px; }
.redo { margin-left: 18px; }
.eraser { margin-left: 21px; margin-top: -3px; }
.more { margin-left: 27px; }
.title { line-height: 37px; letter-spacing: 0.13px; margin-left: -2px; }
.winbtns { display: flex; justify-content: flex-end; }
.caret { display: inline-block; border: 3.5px solid transparent; border-top: 4px solid #fff; border-bottom: 0; }
.undo + .caret, .redo + .caret { margin-left: 9px; }
.eraser + .caret { margin-left: 7px; }
.caret.dim { border-top-color: #64a07f; }
.caret.gray { border-top-color: #777; }

/* ribbon tabs */
.tabs { height: 30px; background: #217346; color: #fff; display: flex; align-items: stretch; line-height: 26px; }
.tabs span { padding: 0 14.5px; }
.tabs .file { padding: 0 24.5px 0 20.5px; }
.tabs .on { background: #f1f1f1; color: #217346; padding: 0 13.5px 0 13px; margin: 0 1px 0 1.5px; }
.tabs em { color: #9dc9af; margin-left: 6px; line-height: 27px; }
.bulb { margin: 6px 0 0 16px; }
.login { font-weight: 400; margin-left: auto; margin-right: 10px; }
.share { width: 84px; height: 29px; background: #0e5c2f; display: flex; gap: 4px; padding-left: 6px; }
.share svg { margin-top: 5px; }

/* ribbon */
.ribbon { height: 114px; background: #f1f1f1; border-bottom: 1px solid #d2d2d2; display: flex; position: relative; }
.group { flex: none; height: 105px; margin-top: 4px; border-right: 1px solid #d2d2d2; display: flex; flex-direction: column; }
.g1 { width: 337px; } .g2 { width: 182px; } .g3 { width: 167px; } .g4 { width: 237px; } .g5 { width: 389px; } .g6 { width: 124px; } .g7 { width: 312px; }
.tools { flex: none; height: 85px; display: flex; padding-left: 3.5px; }
.g1 .tools { padding-left: 4.5px; }
.group footer { flex: none; text-align: center; line-height: 22px; color: #666; position: relative; }
.g7 footer { padding-right: 18px; }
.btn { flex: none; min-width: 50px; padding: 0 2.5px; text-align: center; line-height: 19px; display: flex; flex-direction: column; align-items: center; white-space: nowrap; }
.access { width: 73px; letter-spacing: 0.4px; }
.ico { width: 48px; height: 40px; margin: 3px -10px 0; overflow: visible; display: block; flex: none; }
.btn > .caret { margin-top: 8px; }
.side { margin: 0 0 4px 4px; }
.off { color: #a0a0a0; }
.rule { width: 1px; height: 56px; background: #dcdcdc; margin: 13px 4px 0; }
.list { padding: 0 0 0 4px; margin-top: -1px; }
.list p { height: 28px; display: flex; align-items: center; gap: 4px; white-space: nowrap; line-height: 22px; padding-bottom: 2px; }
.list p svg { position: relative; top: 1px; }
.list.near { padding: 0 0 0 5px; }
.list.near p { height: 27px; }
.g4 .list p { gap: 3px; }
.sorts { width: 27px; padding: 13px 0 0 6px; display: flex; flex-direction: column; gap: 15px; }
.sorts svg { overflow: visible; }
.az { font: 600 12.5px "Open Sans", sans-serif; }
.b { fill: #3f7fbf; }
.p { fill: #8b4fb0; }
.aico { font: 700 15px "Open Sans", sans-serif; fill: #fff; text-anchor: middle; }
.launch { position: absolute; right: 5px; top: 10px; }
.collapse { position: absolute; left: 1897px; top: 99px; }

/* formula bar */
.fbar { height: 56px; display: flex; padding: 12px 6px 12px 6px; font-size: 17.6px; line-height: 27px; }
.fbar > div { background: #fdfdfd; border: 1px solid #c3c3c3; height: 32px; padding-bottom: 2px; }
.fbar .namebox { width: 127px; padding-left: 7px; padding-right: 7px; display: flex; justify-content: space-between; align-items: center; }
.fbar .dots { background: none; border: 0; border-left: 3px dotted #aaa; height: 16px; margin: 8px 17px 0; width: 3px; }
.fx { width: 137px; display: flex; align-items: center; padding-left: 14px; gap: 30px; }
.fx b { font: italic 600 20px "Liberation Serif", serif; color: #555; margin-left: -3px; }
.input { flex: 1; margin-left: 3px; padding: 0 5px 0 13px; display: flex; justify-content: space-between; align-items: center; }

/* worksheet */
.work { height: 734px; display: flex; }
.sheet { width: 1895px; height: 734px; overflow: hidden; border-right: 1px solid #999; border-bottom: 1px solid #999; background: #fff; color: #111;
  font-size: 8px; line-height: 12px; white-space: nowrap; display: grid;
  grid-template-columns: 15px 50px 63px 63px 63px 86px 144px 63px 86px 86px 108px 63px 135px 72px 99px 63px 108px 54px 113px 63px 63px 77px 63px 63px 63px;
  grid-template-rows: 11px 12px 12px 35px 85px 69px 35px 88px 98px 63px 127px 87px 11px; }
.sheet > div { min-width: 0; min-height: 0; }
.h { background: #e6e6e6; border-right: 1px solid #b5b5b5; border-bottom: 1px solid #999; text-align: center; line-height: 10px; color: #333; }
.h.sel { background: #d2d2d2; border-bottom: 2px solid #217346; color: #217346; }
.n { background: #e6e6e6; border-right: 1px solid #999; border-bottom: 1px solid #b5b5b5; display: flex; align-items: flex-end; justify-content: center; line-height: 11px; font-weight: 500; overflow: hidden; }
.n.sel { background: #d2d2d2; border-right: 2px solid #217346; color: #217346; }
.c { border-right: 1px solid #d4d4d4; border-bottom: 1px solid #d4d4d4; padding-left: 1px; display: flex; align-items: center; overflow: hidden; }
.m { justify-content: center; text-align: center; padding: 0; }
.d { grid-row: span 2; }
.fz { border-right-color: #999; }
.k { border-bottom-color: #222; }
.y { background: #ff0; border-color: #ff0; box-shadow: -1px -1px 0 #ff0; }
.y.first { box-shadow: 0 -1px 0 #ff0; }
.full { font-feature-settings: "chws" 0, "halt" 0; }
.sheet p { text-spacing-trim: space-all; }
.t { text-align: center; line-height: 13px; position: relative; }
.tall { grid-row: span 2; line-height: 23px; border-right: 1px solid #999; border-bottom: 1px solid #999; }
.s2 { grid-column: span 2; } .s4 { grid-column: span 4; } .s6 { grid-column: span 6; }
.l { border-bottom: 1px solid #999; }
.left { text-align: left; padding-left: 1px; }
.pale { background: #f4f7f9; }
.gold, .blue, .bold { font-weight: 700; }
.gold { background: #fad257; }
.blue { background: #b8ccfc; }
.cream { background: #fbf0cc; }
.sky { background: #dfe8ff; }
.active { outline: 2px solid #217346; outline-offset: -1px; z-index: 1; }
.active::after { content: ""; position: absolute; right: -3px; bottom: -3px; width: 5px; height: 5px; background: #217346; border: solid #fff; border-width: 1px 0 0 1px; }

.vscroll { width: 19px; margin: 2px 0 0 3px; display: flex; flex-direction: column; height: 731px; }
.arrow { background: #fff; border: 1px solid #c3c3c3; display: flex; align-items: center; justify-content: center; width: 19px; height: 19px; flex: none; }
.vscroll .thumb { height: 203px; background: #fff; border: 1px solid #b0b0b0; }
.track { flex: 1; background: #dadada; }

/* sheet tabs */
.sheets { height: 28px; border-bottom: 1px solid #bcbcbc; display: flex; font-size: 17.3px; line-height: 20px; }
.nav { width: 103px; padding: 8px 0 0 28px; display: flex; gap: 23px; }
.sheets span { height: 20px; margin-top: 3px; padding-left: 11px; border-left: 1px solid #999; white-space: nowrap; line-height: 13px; }
.st1 { width: 95px; }
.sheets .cur { width: 96px; height: 24px; margin-top: 0; padding-left: 12px; line-height: 19px; background: #fff; color: #217346; border-right: 1px solid #999; border-bottom: 2px solid #217346; }
.sheets .st2 { width: 111px; border-left: 0; }
.st3 { width: 189px; } .st4 { width: 95px; } .st5 { width: 94px; } .st6 { width: 111px; } .st7 { width: 153px; } .st8 { width: 32px; }
.st8 i { display: block; width: 20px; height: 20px; overflow: hidden; margin-top: -4px; padding-top: 4px; }
.ell { color: #217346; width: 14px; margin: 2px 0 0 7px; line-height: 16px; font-size: 16px; }
.add { margin: 3px 0 0 10px; }
.sheets .dots { border-left: 3px dotted #aaa; height: 16px; margin: 6px 0 0 17px; }
.hscroll { margin: 4px 0 0 14px; display: flex; width: 726px; }
.hscroll .thumb { width: 544px; height: 19px; background: #fff; border: 1px solid #b0b0b0; }
.hscroll .track { height: 19px; }

/* status bar */
.status { height: 27px; background: #f1f1f1; display: flex; align-items: center; }
.ready { width: 1574px; padding: 0 0 3px 7px; line-height: 22px; }
.view { width: 41px; height: 27px; display: flex; align-items: center; justify-content: center; padding-right: 1px; }
.view.on { background: #c8c8c8; }
.zoom { margin: 0 0 0 4px; }
.pct { margin-left: 10px; font-size: 16px; line-height: 22px; padding-bottom: 2px; letter-spacing: -0.3px; }

/* taskbar */
.taskbar { height: 50px; background: #1c1c1c; color: #fff; display: flex; align-items: center; }
.tb { height: 50px; display: flex; align-items: center; justify-content: center; }
.t1 { width: 60px; } .t2 { width: 60px; } .t3 { width: 70px; }
.run { width: 51px; border-bottom: 3px solid #76b9ed; padding-top: 3px; }
.r2 { margin-left: 11px; }
.run.cur { width: 61px; margin-left: 6px; background: #4c4c4c; }
.tray { margin-left: auto; display: flex; align-items: center; }
.ime { width: 30px; text-align: center; font-size: 18px; font-weight: 500; padding-bottom: 2px; }
.clock { width: 90px; text-align: center; font-size: 16px; line-height: 23px; letter-spacing: -0.1px; padding-bottom: 2px; }
.note { margin-left: 16px; }
.peek { width: 6px; height: 50px; margin-left: 24px; border-left: 1px solid #666; }
```
